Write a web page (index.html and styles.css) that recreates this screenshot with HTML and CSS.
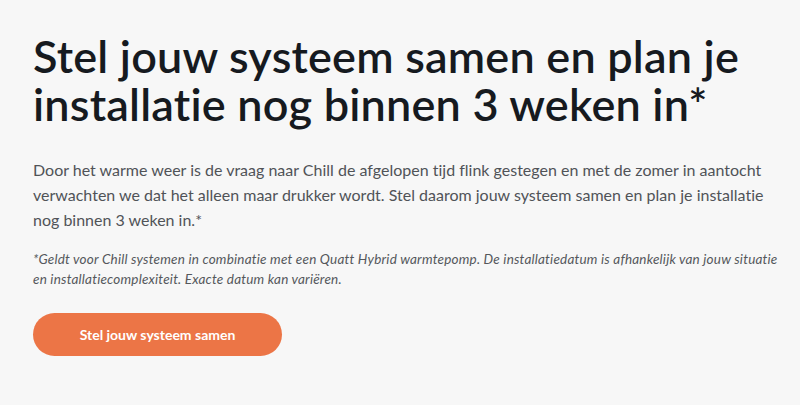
FILE: index.html
```html
<!DOCTYPE html>
<html lang="nl">
<head>
<meta charset="utf-8">
<title>Stel jouw systeem samen</title>
<link rel="stylesheet" href="styles.css">
</head>
<body>
<section class="promo">
  <h1 class="promo-title">Stel jouw systeem samen en plan je installatie nog binnen 3 weken in*</h1>
  <p class="promo-text">Door het warme weer is de vraag naar Chill de afgelopen tijd flink gestegen en met de zomer in aantocht verwachten we dat het alleen maar drukker wordt. Stel daarom jouw systeem samen en plan je installatie nog binnen 3 weken in.*</p>
  <p class="promo-note">*Geldt voor Chill systemen in combinatie met een Quatt Hybrid warmtepomp. De installatiedatum is afhankelijk van jouw situatie en installatiecomplexiteit. Exacte datum kan variëren.</p>
  <a class="promo-button" href="#">Stel jouw systeem samen</a>
</section>
</body>
</html>
```
FILE: styles.css
```css
html, body {
  margin: 0;
  padding: 0;
  background: #f7f7f7;
}

body {
  font-family: Lato, "Noto Sans", sans-serif;
  font-variant-ligatures: no-common-ligatures;
  color: #161a1f;
}

.promo {
  display: flex;
  flex-direction: column;
  align-items: flex-start;
  padding: 32px 0 0 33px;
  width: 755px;
}

.promo-title {
  margin: 0;
  font-size: 45px;
  line-height: 48px;
  font-weight: 600;
  letter-spacing: 0.2px;
  color: #161a1f;
}

.promo-text {
  margin: 29px 0 0;
  font-size: 16px;
  line-height: 25px;
  font-weight: 400;
  color: #505357;
}

.promo-note {
  margin: 17px 0 0;
  font-size: 13.5px;
  line-height: 20px;
  font-style: italic;
  letter-spacing: 0.2px;
  color: #55585c;
}

.promo-button {
  margin-top: 24px;
  display: flex;
  align-items: center;
  justify-content: center;
  width: 249px;
  height: 43px;
  border-radius: 22px;
  background: #ec7546;
  color: #ffffff;
  font-size: 14px;
  font-weight: 700;
  text-decoration: none;
}
```
